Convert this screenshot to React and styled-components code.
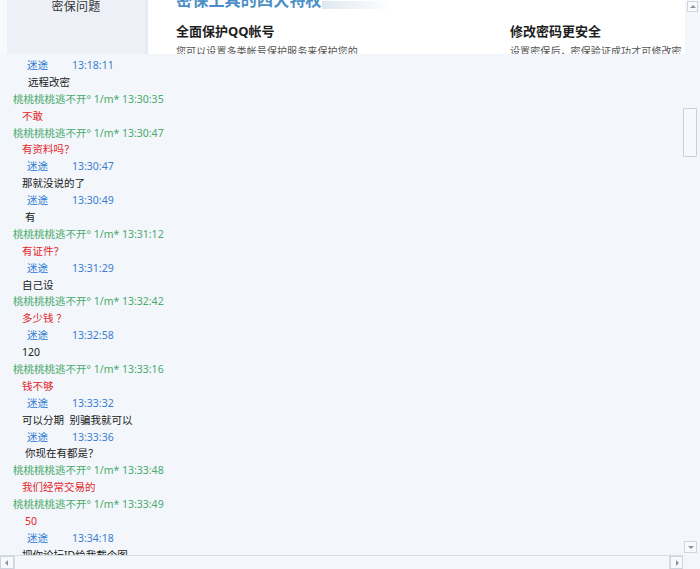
import styled, { createGlobalStyle } from "styled-components";

const GlobalStyle = createGlobalStyle`
  html, body {
    margin: 0;
    padding: 0;
    background: #f3f7fb;
  }
  body {
    font-family: "Noto Sans", "Noto Sans CJK SC", sans-serif;
  }
`;

const Screen = styled.div`
  width: 700px;
  height: 569px;
  overflow: hidden;
  display: flex;
  flex-direction: column;
  background: #f3f7fb;
`;

const PageStrip = styled.div`
  height: 54px;
  flex: none;
  display: flex;
  overflow: hidden;
  background: #ffffff;
`;

const LeftEdge = styled.div`
  width: 7px;
  flex: none;
  background: #f7f9fc;
`;

const SideNav = styled.div`
  width: 138px;
  flex: none;
  background: #edf1f7;
  border-right: 3px solid #e6ebf2;
  display: flex;
  justify-content: center;
`;

const NavItem = styled.div`
  margin-top: -1px;
  font-size: 12px;
  line-height: 15px;
  color: #333;
  letter-spacing: 0.3px;
`;

const Feature = styled.div`
  flex: 1;
  min-width: 0;
  padding-left: 28px;
  display: flex;
  flex-direction: column;
  background: #fff;
`;

const HeadingRow = styled.div`
  display: flex;
  align-items: flex-start;
  height: 14px;
`;

const Heading = styled.div`
  margin-top: -10px;
  font-size: 16px;
  line-height: 20px;
  font-weight: bold;
  color: #4b8fc6;
  letter-spacing: 0.2px;
`;

const HeadingFade = styled.div`
  width: 70px;
  height: 8px;
  margin-top: 1px;
  background: linear-gradient(90deg, #dfe8f1, rgba(255, 255, 255, 0));
`;

const Columns = styled.div`
  display: flex;
  margin-top: 13px;
`;

const Column = styled.div`
  width: ${({ width }) => width}px;
  flex: none;
  display: flex;
  flex-direction: column;
`;

const ColTitle = styled.div`
  font-size: 13px;
  line-height: 16px;
  font-weight: bold;
  color: #1e1e1e;
`;

const ColText = styled.div`
  margin-top: 6px;
  font-size: 10px;
  line-height: 12px;
  color: #555;
  white-space: nowrap;
  letter-spacing: 0.1px;
`;

const PageScroll = styled.div`
  width: 15px;
  flex: none;
  background: #f3f6fa;
  display: flex;
  flex-direction: column;
  align-items: center;
  padding-top: 1px;
`;

const ArrowBox = styled.div`
  width: ${({ w }) => w || 11}px;
  height: ${({ h }) => h || 11}px;
  box-sizing: border-box;
  border: 1px solid #cdd5de;
  background: #f7f9fc;
  display: flex;
  align-items: center;
  justify-content: center;
  flex: none;
`;

const Chat = styled.div`
  flex: 1;
  display: grid;
  grid-template-columns: 1fr 17px;
  grid-template-rows: 1fr 14px;
  min-height: 0;
`;

const Messages = styled.div`
  overflow: hidden;
  padding-top: 3px;
  font-size: 10.5px;
`;

const Row = styled.div`
  height: 16.9px;
  line-height: 16.9px;
  white-space: pre;
  display: flex;
  padding-left: ${({ indent }) => indent}px;
  color: ${({ color }) => color};
`;

const Name = styled.span`
  width: 45px;
  color: #2f7bd2;
`;

const Time = styled.span`
  color: #3a7cd0;
`;

const VScroll = styled.div`
  display: flex;
  flex-direction: column;
  align-items: flex-start;
  padding-top: 54px;
`;

const Thumb = styled.div`
  width: 14px;
  height: 49px;
  box-sizing: border-box;
  border: 1px solid #c9d2dc;
  background: #f6f8fc;
  border-radius: 1px;
`;

const Spacer = styled.div`
  flex: 1;
`;

const VBottom = styled.div`
  padding-left: 1px;
  padding-bottom: 2px;
`;

const HScroll = styled.div`
  display: flex;
  border-top: 1px solid #d7dde4;
  box-sizing: border-box;
  background: #f4f7fb;
`;

const HTrack = styled.div`
  flex: 1;
  border-left: 1px solid #d7dde4;
  border-right: 1px solid #d7dde4;
`;

const Corner = styled.div`
  background: #f3f7fb;
`;

const Tri = ({ dir }) => {
  const pts = {
    up: "1,5 4,2 7,5",
    down: "1,3 4,6 7,3",
    left: "5,1 2,4 5,7",
    right: "3,1 6,4 3,7",
  };
  return (
    <svg width="8" height="8" viewBox="0 0 8 8">
      <polygon points={pts[dir]} fill="#8c96a3" />
    </svg>
  );
};

const GREEN = "#49a96c";
const RED = "#e2262b";
const DARK = "#202020";

const msgs = [
  { who: "me", time: "13:18:11" },
  { text: "远程改密", x: 28 },
  { who: "peer", time: "13:30:35" },
  { text: "不敢", x: 22, red: true },
  { who: "peer", time: "13:30:47" },
  { text: "有资料吗？", x: 22, red: true },
  { who: "me", time: "13:30:47" },
  { text: "那就没说的了", x: 22 },
  { who: "me", time: "13:30:49" },
  { text: "有", x: 25 },
  { who: "peer", time: "13:31:12" },
  { text: "有证件？", x: 22, red: true },
  { who: "me", time: "13:31:29" },
  { text: "自己设", x: 22 },
  { who: "peer", time: "13:32:42" },
  { text: "多少钱 ？", x: 22, red: true },
  { who: "me", time: "13:32:58" },
  { text: "120", x: 22 },
  { who: "peer", time: "13:33:16" },
  { text: "钱不够", x: 22, red: true },
  { who: "me", time: "13:33:32" },
  { text: "可以分期  别骗我就可以", x: 22 },
  { who: "me", time: "13:33:36" },
  { text: "你现在有都是？", x: 25 },
  { who: "peer", time: "13:33:48" },
  { text: "我们经常交易的", x: 22, red: true },
  { who: "peer", time: "13:33:49" },
  { text: "50", x: 25, red: true },
  { who: "me", time: "13:34:18" },
  { text: "把你论坛ID给我截个图", x: 22 },
];

function MessageRow({ m }) {
  if (m.who === "me") {
    return (
      <Row indent={27}>
        <Name>迷途</Name>
        <Time>{m.time}</Time>
      </Row>
    );
  }
  if (m.who === "peer") {
    return (
      <Row indent={13} color={GREEN}>
        桃桃桃桃逃不开° 1/m* {m.time}
      </Row>
    );
  }
  return (
    <Row indent={m.x} color={m.red ? RED : DARK}>
      {m.text}
    </Row>
  );
}

export default function App() {
  return (
    <>
      <GlobalStyle />
      <Screen>
        <PageStrip>
          <LeftEdge />
          <SideNav>
            <NavItem>密保问题</NavItem>
          </SideNav>
          <Feature>
            <HeadingRow>
              <Heading>密保工具的四大特权</Heading>
              <HeadingFade />
            </HeadingRow>
            <Columns>
              <Column width={334}>
                <ColTitle>全面保护QQ帐号</ColTitle>
                <ColText>您可以设置多类帐号保护服务来保护您的</ColText>
              </Column>
              <Column width={170}>
                <ColTitle>修改密码更安全</ColTitle>
                <ColText>设置密保后，密保验证成功才可修改密</ColText>
              </Column>
            </Columns>
          </Feature>
          <PageScroll>
            <ArrowBox>
              <Tri dir="up" />
            </ArrowBox>
          </PageScroll>
        </PageStrip>
        <Chat>
          <Messages>
            {msgs.map((m, i) => (
              <MessageRow key={i} m={m} />
            ))}
          </Messages>
          <VScroll>
            <Thumb />
            <Spacer />
            <VBottom>
              <ArrowBox w={13} h={12}>
                <Tri dir="down" />
              </ArrowBox>
            </VBottom>
          </VScroll>
          <HScroll>
            <ArrowBox w={14} h={13}>
              <Tri dir="left" />
            </ArrowBox>
            <HTrack />
            <ArrowBox w={13} h={13}>
              <Tri dir="right" />
            </ArrowBox>
          </HScroll>
          <Corner />
        </Chat>
      </Screen>
    </>
  );
}
